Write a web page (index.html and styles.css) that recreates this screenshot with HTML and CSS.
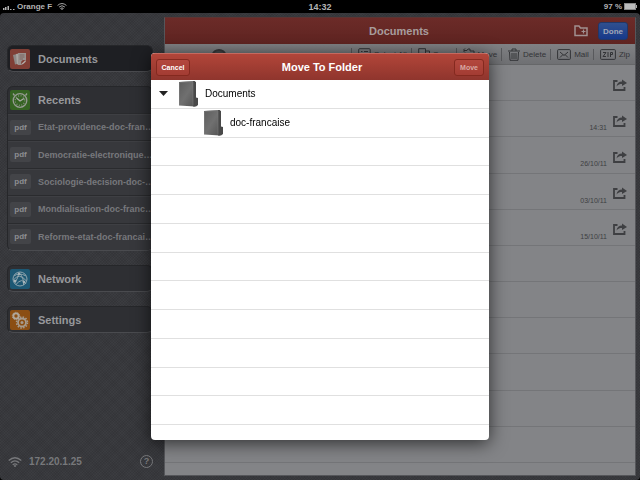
FILE: index.html
```html
<!DOCTYPE html>
<html lang="en">
<head>
<meta charset="utf-8">
<meta name="viewport" content="width=device-width, initial-scale=1">
<title>Documents</title>
<link rel="stylesheet" href="styles.css">
</head>
<body>
<svg class="defs" aria-hidden="true">
  <symbol id="share" viewBox="0 0 14 12">
    <path d="M4.500 2H1v9h10.500V8" fill="none" stroke="currentColor" stroke-width="1.800"/>
    <path d="M3.500 7.500C4 4 6 2.500 9 2.500V.5L14 4 9 7V5C7 5 5 5.500 3.500 7.500z" fill="currentColor"/>
  </symbol>
  <symbol id="binder" viewBox="0 0 20 26">
    <path d="M1 1 15 0h2v25.500L1 24.500z" fill="url(#steel)"/>
    <path d="M16 0l2 1v15.500l2 .5v7L18 25.500h-3V0z" fill="#494949"/>
    <path d="M1.500 24V1.500L15 .5v24" fill="none" stroke="#828282" stroke-width=".5"/>
  </symbol>
  <linearGradient id="steel" x1="0" y1="0" x2="1" y2="1">
    <stop offset="0" stop-color="#5c5c5c"/><stop offset=".5" stop-color="#707070"/><stop offset="1" stop-color="#535353"/>
  </linearGradient>
  <symbol id="wifi" viewBox="0 0 14 10">
    <path d="M.7 3.500Q7-2 13.300 3.500M2.800 5.800Q7 2 11.200 5.800M4.700 7.900Q7 6 9.300 7.900" fill="none" stroke="currentColor" stroke-width="1.300"/>
    <circle cx="7" cy="9" r="1" fill="currentColor"/>
  </symbol>
</svg>

<header class="status">
  <div class="carrier">
    <svg width="12" height="6" viewBox="0 0 12 6" fill="currentColor"><path d="M0 4h1.500v2H0zM2 3h1.500v3H2zM4.500 2H6v4H4.500zM7 5h1.500v1H7zM10 5h1.500v1H10z"/></svg>
    <span>Orange F</span>
    <svg class="status-wifi" width="10" height="7"><use href="#wifi"/></svg>
  </div>
  <time>14:32</time>
  <div class="battery">
    <span>97 %</span>
    <svg width="13" height="7" viewBox="0 0 13 7"><rect x=".5" y=".5" width="11" height="6" fill="#bbb" stroke="#888"/><path d="M12 2h1v3h-1z" fill="#aaa"/></svg>
  </div>
</header>

<div class="app">
  <nav class="sidebar">
    <a class="card active" href="#documents">
      <svg class="tile" viewBox="0 0 20 20"><rect width="20" height="20" rx="2" fill="#803e35"/><path d="M3 6l4-1v10l-2 .5z" fill="#8d8785"/><path d="M6 5l3-.5V15l-2 .5z" fill="#a8a3a0"/><path d="M8 4h8v9l-2.500 3H8z" fill="#99918e"/><path d="M9.500 6H14.500M9.500 8H14.500M9.500 10H13" stroke="#71504b" stroke-width=".7"/><circle cx="13.800" cy="13.500" r="2.600" fill="#803e35"/><path d="M12.200 15l3.300-3" stroke="#b5aeab" stroke-width="1.300"/></svg>
      Documents
    </a>
    <section class="card group">
      <a class="heading" href="#recents">
        <svg class="tile" viewBox="0 0 20 20"><rect width="20" height="20" rx="2" fill="#356322"/><circle cx="10" cy="10.500" r="6.800" fill="none" stroke="#969b92" stroke-width="1.300"/><circle cx="10" cy="10.500" r="4.800" fill="none" stroke="#8a9186" stroke-width="1.200" stroke-dasharray="1 1.510"/><path d="M6.500 8l3.500 3 4-2.500" fill="none" stroke="#a9ada6" stroke-width="1.300"/><path d="M4.500 5.500L3 3.500M15.500 5.500l1.500-2" stroke="#969b92" stroke-width="1.300"/></svg>
        Recents
      </a>
      <div class="recents">
        <a href="#r1"><span class="tag">pdf</span>Etat-providence-doc-fran…</a>
        <a href="#r2"><span class="tag">pdf</span>Democratie-electronique…</a>
        <a href="#r3"><span class="tag">pdf</span>Sociologie-decision-doc-…</a>
        <a href="#r4"><span class="tag">pdf</span>Mondialisation-doc-franc…</a>
        <a href="#r5"><span class="tag">pdf</span>Reforme-etat-doc-francai…</a>
      </div>
    </section>
    <a class="card" href="#network">
      <svg class="tile" viewBox="0 0 20 20"><rect width="20" height="20" rx="2" fill="#1d5874"/><g fill="none" stroke="#8fa5ae" stroke-width="1"><circle cx="10" cy="10" r="7"/><path d="M4 7Q9 3 16 7M3.500 11Q9 3 16.500 12M5 14Q8 9 9 3.500M6 15.500Q12 8 16 15M9 4Q14 8 13.500 16"/></g><g fill="#a5b3b9"><circle cx="9" cy="5" r="1.300"/><circle cx="5" cy="12" r="1.300"/><circle cx="14" cy="13" r="1.300"/></g></svg>
      Network
    </a>
    <a class="card" href="#settings">
      <svg class="tile" viewBox="0 0 20 20"><rect width="20" height="20" rx="2" fill="#8b4e13"/><circle cx="12" cy="12.500" r="4" fill="none" stroke="#a69b8e" stroke-width="1.800"/><circle cx="12" cy="12.500" r="5.500" fill="none" stroke="#a69b8e" stroke-width="1.500" stroke-dasharray="1.500 1.380"/><circle cx="12" cy="12.500" r="1.500" fill="#a69b8e"/><circle cx="6" cy="6" r="2.600" fill="#8b4e13" stroke="#b0a79c" stroke-width="1.800"/><circle cx="6" cy="6" r="3.700" fill="none" stroke="#b0a79c" stroke-dasharray="1.200 1.120"/></svg>
      Settings
    </a>
    <footer class="device">
      <svg width="14" height="10"><use href="#wifi"/></svg>
      <span>172.20.1.25</span>
      <button class="help" aria-label="Help">?</button>
    </footer>
  </nav>

  <main class="panel">
    <header class="titlebar">
      <h1>Documents</h1>
      <button class="icon-button" aria-label="New folder"><svg width="14" height="12" viewBox="0 0 14 12"><path d="M1 10.500V1h4l1.500 2H13v7.500z" fill="none" stroke="#a19090" stroke-width="1.500"/><path d="M9.500 4.500v4M7.500 6.500h4" stroke="#a19090" stroke-width="1.200"/></svg></button>
      <button class="done">Done</button>
    </header>
    <div class="toolbar">
      <button class="info" aria-label="Info"><svg width="14" height="12" viewBox="0 0 14 12"><ellipse cx="7" cy="6.500" rx="6" ry="4.500" fill="#47484a" stroke="#37383a" stroke-width="2"/></svg></button>
      <button><svg width="13" height="12" viewBox="0 0 13 12" fill="none" stroke="currentColor"><rect x=".7" y=".7" width="11.500" height="10.500" rx="1"/><path d="M3 3.500h1.500M6 3.500h4M3 6h1.500M6 6h4M3 8.500h1.500M6 8.500h4"/></svg>Select All</button>
      <button><svg width="12" height="12" viewBox="0 0 12 12" fill="none" stroke="currentColor"><path d="M.7.7h6.800v9H.7zM8 3h3.500v8.500H4V10"/></svg>Copy</button>
      <button><svg width="12" height="12" viewBox="0 0 12 12" fill="none" stroke="currentColor"><path d="M1 2.500h3l1-1.500h2v2h4v8H2V5M0 2.500l2-2M0 2.500l2 2"/></svg>Move</button>
      <button><svg width="12" height="13" viewBox="0 0 12 13" fill="none" stroke="currentColor"><path d="M0 3h12M4 3V1h4v2M1.500 4l.5 8.300h8L10.500 4M4 5v6M6 5v6M8 5v6"/></svg>Delete</button>
      <button><svg width="14" height="11" viewBox="0 0 14 11" fill="none" stroke="currentColor"><rect x=".6" y=".6" width="12.800" height="9.800" rx="1"/><path d="M3 3l4 3.500L11 3M3 8.500l3-3M11 8.500l-3-3"/></svg>Mail</button>
      <button><svg width="16" height="11" viewBox="0 0 16 11" fill="none" stroke="currentColor"><rect x=".6" y=".6" width="14.800" height="9.800" rx="1"/><path d="M3 3.500h3L3 7.500h3M8 3v5M10.500 8V3.500h2v2h-2"/></svg>Zip</button>
    </div>
    <ul class="files">
      <li><svg width="14" height="12"><use href="#share"/></svg></li>
      <li><time>14:31</time><svg width="14" height="12"><use href="#share"/></svg></li>
      <li><time>26/10/11</time><svg width="14" height="12"><use href="#share"/></svg></li>
      <li><time>03/10/11</time><svg width="14" height="12"><use href="#share"/></svg></li>
      <li><time>15/10/11</time><svg width="14" height="12"><use href="#share"/></svg></li>
      <li></li><li></li><li></li><li></li><li></li><li></li>
    </ul>
  </main>
</div>

<div class="overlay">
  <section class="dialog" role="dialog" aria-labelledby="dialog-title">
    <header class="dialog-bar">
      <button class="cancel">Cancel</button>
      <h2 id="dialog-title">Move To Folder</h2>
      <button class="move">Move</button>
    </header>
    <ul class="tree">
      <li><svg class="arrow" width="9" height="5" viewBox="0 0 9 5"><path d="M0 0h9L4.500 5z" fill="#222"/></svg><svg width="20" height="26"><use href="#binder"/></svg>Documents</li>
      <li class="child"><svg width="20" height="26"><use href="#binder"/></svg>doc-francaise</li>
      <li></li><li></li><li></li><li></li><li></li><li></li><li></li><li></li><li></li><li></li>
    </ul>
  </section>
</div>
</body>
</html>
```
FILE: styles.css
```css
* { box-sizing: border-box; }

body {
  margin: 0;
  height: 100vh;
  display: flex;
  flex-direction: column;
  overflow: hidden;
  background: #000;
  font-family: "Liberation Sans", Arial, sans-serif;
  font-size: 8px;
}

button {
  margin: 0;
  padding: 0;
  border: 0;
  background: none;
  color: inherit;
  font: inherit;
}

a { color: inherit; text-decoration: none; }
h1, h2 { margin: 0; font-size: 11px; }
ul { margin: 0; padding: 0; list-style: none; }
svg { flex: none; }

.defs { position: absolute; width: 0; height: 0; }

.status {
  display: grid;
  grid-template-columns: 1fr auto 1fr;
  align-items: center;
  height: 13px;
  padding: 0 3px;
  color: #b4b4b4;
  font-weight: bold;
}
.status > time { font-size: 9px; }
.carrier, .battery { display: flex; align-items: center; gap: 2px; }
.battery { justify-content: flex-end; }
.status-wifi { margin-left: 3px; }

.app {
  flex: 1;
  display: grid;
  grid-template-columns: 164px 1fr;
  min-height: 0;
  padding: 4px 4px 4px 0;
  border-radius: 4px;
  background:
    repeating-linear-gradient(45deg, #0000 0 1px, #00000010 1px 2px),
    repeating-linear-gradient(-45deg, #3b3c40 0 1px, #37383c 1px 2px);
}

.sidebar {
  display: flex;
  flex-direction: column;
  gap: 14px;
  padding: 28px 11px 0 7px;
  color: #97989b;
  font-size: 11px;
  font-weight: bold;
}

.card {
  display: block;
  border: 1px solid #26272a;
  border-bottom-color: #4a4b4f;
  border-radius: 6px;
  background: #2e2f33;
  overflow: hidden;
}
a.card, .heading {
  display: flex;
  align-items: center;
  gap: 8px;
  height: 27px;
  padding: 0 2px;
}
a.active { background: #1e1f23; }
.group .heading { height: 26px; }
.tile { width: 20px; height: 20px; }

.recents {
  display: grid;
  grid-auto-rows: 1fr;
  height: 137px;
  background: #37383c;
  color: #77787c;
  font-size: 9px;
}
.recents a {
  display: flex;
  align-items: center;
  gap: 7px;
  padding: 0 2px;
  border-top: 1px solid #2a2b2e;
  box-shadow: inset 0 1px #3e3f43;
  white-space: nowrap;
}
.tag {
  flex: none;
  width: 21px;
  border-radius: 2px;
  background: #434448;
  color: #8e8f92;
  font-size: 8px;
  line-height: 15px;
  text-align: center;
}

.device {
  display: flex;
  align-items: center;
  gap: 7px;
  margin-top: auto;
  padding: 0 0 8px 1px;
  color: #77787b;
  font-size: 10px;
}
.help {
  width: 13px;
  height: 13px;
  margin-left: auto;
  border: 1px solid #77787b;
  border-radius: 50%;
  font-size: 9px;
  line-height: 11px;
}

.panel {
  display: flex;
  flex-direction: column;
  min-width: 0;
  border: 1px solid #55565a;
  border-top-color: #5d3432;
  background: #838487;
}

.titlebar {
  display: grid;
  grid-template-columns: 1fr 24px 30px;
  align-items: center;
  height: 26px;
  padding: 0 7px 0 59px;
  background: linear-gradient(#6c2b28, #5f2421);
  color: #a89d9d;
}
.titlebar h1 { text-align: center; }
.icon-button svg { display: block; }
.done {
  height: 18px;
  border: 1px solid #223768;
  border-radius: 3px;
  background: linear-gradient(#30508f, #17398a);
  color: #a0a7b8;
  font-weight: bold;
}

.toolbar {
  display: flex;
  align-items: center;
  height: 21px;
  padding-right: 5px;
  border-bottom: 1px solid #666769;
  background: linear-gradient(#808184, #6f7073);
  color: #333437;
}
.toolbar button {
  display: flex;
  align-items: center;
  gap: 3px;
  margin-left: 4px;
  padding-left: 6px;
  border-left: 1px solid #58595c;
  white-space: nowrap;
}
.toolbar button.info { margin: 0 auto 0 47px; padding: 0; border: 0; }

.files {
  flex: 1;
  display: grid;
  grid-template-rows: repeat(11, 1fr);
  padding-bottom: 12px;
}
.files li {
  display: grid;
  grid-template-columns: 1fr 14px;
  column-gap: 6px;
  align-items: center;
  padding-right: 8px;
  border-bottom: 1px solid #747578;
  color: #3e3f42;
}
.files svg { grid-column: 2; grid-row: 1; margin-top: 4px; }
.files time { grid-row: 1; padding-top: 18px; font-size: 7px; text-align: right; }

.overlay {
  position: fixed;
  inset: 13px 0 0;
  display: grid;
  place-items: center;
}
.dialog {
  display: flex;
  flex-direction: column;
  width: 338px;
  height: 387px;
  max-width: 100%;
  max-height: 100%;
  border-radius: 4px;
  background: #fff;
  box-shadow: 0 3px 18px #000a;
  overflow: hidden;
}
.dialog-bar {
  display: grid;
  grid-template-columns: 34px 1fr 30px;
  align-items: center;
  height: 27px;
  padding: 0 5px;
  border-top: 1px solid #c46a60;
  background: linear-gradient(#b24539, #8f352d);
  color: #fff;
}
.dialog-bar h2 { text-align: center; }
.dialog-bar button {
  height: 17px;
  border: 1px solid #84291f;
  border-radius: 3px;
  background: linear-gradient(#b3483e, #a33c33);
  font-size: 7px;
  font-weight: bold;
}
.dialog-bar .move { color: #d9aaa5; }

.tree {
  flex: 1;
  display: grid;
  grid-template-rows: repeat(12, 1fr);
  min-height: 0;
  padding-bottom: 15px;
}
.tree li {
  display: flex;
  align-items: center;
  gap: 7px;
  min-height: 0;
  padding-left: 8px;
  border-bottom: 1px solid #e0e0e0;
  font-size: 10px;
}
.tree .arrow { margin-right: 3px; }
.tree .child { padding-left: 52px; }
```
